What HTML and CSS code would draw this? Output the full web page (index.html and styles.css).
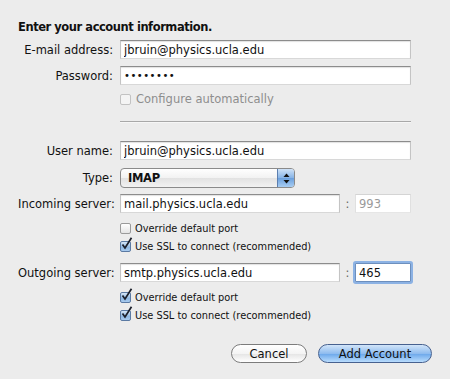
FILE: index.html
```html
<!DOCTYPE html>
<html lang="en">
<head>
    <meta charset="UTF-8">
    <meta name="viewport" content="width=device-width, initial-scale=1.0">
    <title>Add Account</title>
    <link rel="stylesheet" href="styles.css">
</head>
<body>
    <div class="sheet">
        <h1 class="title">Enter your account information.</h1>

        <div class="row field-row">
            <label class="label">E-mail address:</label>
            <input class="field" type="text" value="jbruin@physics.ucla.edu" readonly>
        </div>
        <div class="row field-row">
            <label class="label">Password:</label>
            <input class="field field-pass" type="password" value="12345678" readonly>
        </div>
        <div class="row check-row first-check">
            <span></span>
            <div class="check disabled"><span class="box"></span>Configure automatically</div>
        </div>

        <div class="row sep-row">
            <span></span>
            <div class="separator"></div>
        </div>

        <div class="row field-row user-row">
            <label class="label">User name:</label>
            <input class="field" type="text" value="jbruin@physics.ucla.edu" readonly>
        </div>
        <div class="row type-row">
            <label class="label">Type:</label>
            <div class="popup">
                <span class="popup-text">IMAP</span>
                <span class="popup-arrows">
                    <svg width="7" height="11" viewBox="0 0 7 11">
                        <path d="M3.5 0.5 L6.5 4 L0.5 4 Z" fill="#111"/>
                        <path d="M3.5 10.5 L6.5 7 L0.5 7 Z" fill="#111"/>
                    </svg>
                </span>
            </div>
        </div>
        <div class="row field-row server-row">
            <label class="label">Incoming server:</label>
            <div class="server">
                <input class="field field-host" type="text" value="mail.physics.ucla.edu" readonly>
                <span class="colon">:</span>
                <input class="field field-port muted" type="text" value="993" readonly>
            </div>
        </div>
        <div class="row check-row opt-first">
            <span></span>
            <div class="check small"><span class="box"></span>Override default port</div>
        </div>
        <div class="row check-row opt-next">
            <span></span>
            <div class="check small"><span class="box checked"><svg width="13" height="14" viewBox="0 0 13 14"><path d="M2.5 7.5 L5 11 L11.5 0.8" fill="none" stroke="#1b1f2a" stroke-width="1.7"/></svg></span>Use SSL to connect (recommended)</div>
        </div>

        <div class="row field-row server-row out-row">
            <label class="label">Outgoing server:</label>
            <div class="server">
                <input class="field field-host" type="text" value="smtp.physics.ucla.edu" readonly>
                <span class="colon">:</span>
                <input class="field field-port focused" type="text" value="465" readonly>
            </div>
        </div>
        <div class="row check-row opt-first">
            <span></span>
            <div class="check small"><span class="box checked"><svg width="13" height="14" viewBox="0 0 13 14"><path d="M2.5 7.5 L5 11 L11.5 0.8" fill="none" stroke="#1b1f2a" stroke-width="1.7"/></svg></span>Override default port</div>
        </div>
        <div class="row check-row opt-next">
            <span></span>
            <div class="check small"><span class="box checked"><svg width="13" height="14" viewBox="0 0 13 14"><path d="M2.5 7.5 L5 11 L11.5 0.8" fill="none" stroke="#1b1f2a" stroke-width="1.7"/></svg></span>Use SSL to connect (recommended)</div>
        </div>

        <div class="buttons">
            <button class="btn btn-cancel">Cancel</button>
            <button class="btn btn-default">Add Account</button>
        </div>
    </div>
</body>
</html>
```

FILE: styles.css
```css
body {
    margin: 0;
    background-color: #ececec;
    font-family: "DejaVu Sans", "Liberation Sans", sans-serif;
    font-size: 11.5px;
    color: #111;
}
.sheet {
    padding: 20px 18px 0 18px;
}
.title {
    margin: 0 0 6px 0;
    font-size: 11.5px;
    line-height: 14px;
    font-weight: bold;
    letter-spacing: -0.45px;
}
.row {
    display: grid;
    grid-template-columns: 95px 291px;
    column-gap: 7px;
    align-items: center;
}
.label {
    text-align: right;
    white-space: nowrap;
}
.field-row {
    height: 19px;
    margin-bottom: 7px;
}
.field {
    box-sizing: border-box;
    height: 19px;
    width: 100%;
    margin: 0;
    padding: 0 3px;
    background: #fff;
    border: 1px solid;
    border-color: #8c8c8c #c4c4c4 #d8d8d8 #c4c4c4;
    box-shadow: inset 0 1px 1px rgba(0, 0, 0, 0.12);
    font-family: inherit;
    font-size: 11.5px;
    color: #111;
    outline: none;
}
.field-pass {
    font-size: 10px;
    letter-spacing: 0.5px;
}

/* checkboxes */
.check-row {
    height: 14px;
}
.first-check {
    margin-top: 2px;
}
.check {
    display: flex;
    align-items: center;
    gap: 5px;
    white-space: nowrap;
}
.check.small {
    font-size: 9.8px;
    gap: 4px;
}
.check.disabled {
    color: #8e8e8e;
}
.box {
    position: relative;
    box-sizing: border-box;
    width: 11px;
    height: 11px;
    border: 1px solid #9a9a9a;
    border-radius: 2px;
    background: linear-gradient(#ffffff, #e4e4e4);
}
.check.disabled .box {
    border-color: #c2c2c2;
    background: #f4f4f4;
}
.box.checked {
    border-color: #5b7aa3;
    background: linear-gradient(#d6e6f7, #8fb8e3 60%, #a9cbef);
}
.box svg {
    position: absolute;
    left: -1px;
    top: -5px;
}

.sep-row {
    margin-top: 15px;
}
.separator {
    border-top: 1px solid #a8a8a8;
    border-bottom: 1px solid #f6f6f6;
}
.user-row {
    margin-top: 18px;
    margin-bottom: 8px;
}

/* popup */
.type-row {
    height: 20px;
    margin-bottom: 6px;
}
.popup {
    box-sizing: border-box;
    width: 175px;
    height: 20px;
    display: flex;
    border: 1px solid #8a8a8a;
    border-radius: 4px;
    overflow: hidden;
    background: linear-gradient(#ffffff, #f2f2f2 50%, #e2e2e2 51%, #f2f2f2);
}
.popup-text {
    flex: 1;
    padding-left: 7px;
    line-height: 18px;
    font-weight: bold;
    letter-spacing: -0.3px;
}
.popup-arrows {
    width: 16px;
    display: flex;
    align-items: center;
    justify-content: center;
    border-left: 1px solid #5c7fb0;
    background: linear-gradient(#cfe2f7, #86b3e6 50%, #6a9fdd 51%, #a8cdf2);
}

/* server + port */
.server {
    display: flex;
    align-items: center;
}
.field-host {
    width: 220px;
}
.colon {
    width: 15px;
    text-align: center;
    color: #666;
}
.field-port {
    width: 56px;
}
.muted {
    color: #9a9a9a;
    border-color: #d4d4d4 #e0e0e0 #e6e6e6 #e0e0e0;
    box-shadow: none;
}
.focused {
    border-color: #6d8fbd;
    box-shadow: 0 0 0 2px #8cb2e4;
    border-radius: 1px;
}
.server-row {
    margin-bottom: 8px;
}
.opt-next {
    margin-top: 4px;
}
.out-row {
    margin-top: 10px;
}

/* buttons */
.buttons {
    display: flex;
    justify-content: flex-end;
    gap: 11px;
    margin-top: 22px;
}
.btn {
    height: 19px;
    padding: 0;
    border-radius: 10px;
    font-family: inherit;
    font-size: 11.5px;
    color: #111;
    cursor: pointer;
}
.btn-cancel {
    width: 76px;
    border: 1px solid #7c7c7c;
    background: linear-gradient(#ffffff, #f4f4f4 50%, #e4e4e4 51%, #ffffff);
}
.btn-default {
    width: 114px;
    border: 1px solid #47618f;
    background: linear-gradient(#d2e5f9, #8fbcef 50%, #6aa6ea 51%, #b9dcfd);
}
```
